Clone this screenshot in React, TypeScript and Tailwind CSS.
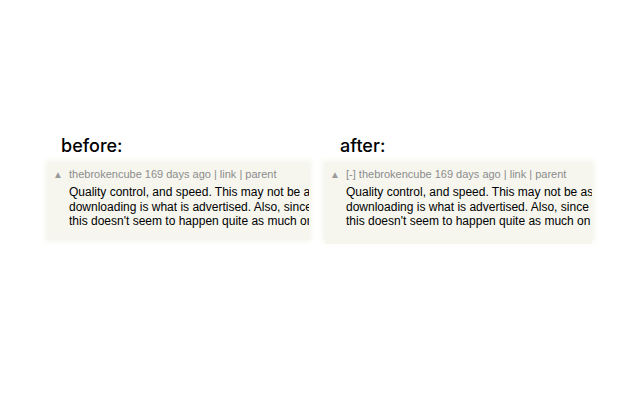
import React from 'react'

const lines = [
  'Quality control, and speed. This may not be as big an issue for everyone,',
  'downloading is what is advertised. Also, since the apps are reviewed,',
  "this doesn't seem to happen quite as much on the store as elsewhere.",
]

function Comment({ collapse }: { collapse?: boolean }) {
  return (
    <div className="bg-[#f6f6ef] shadow-[0_0_5px_3px_#f6f6ef] pt-[5px] pb-[10px] overflow-hidden">
      <div className="flex items-center h-[13px] text-[11px] leading-[13px] text-[#8c8c8c]">
        <span className="w-[21px] pl-[5px] text-[10px] leading-[10px] text-[#9a9a9a]">▲</span>
        <span className="whitespace-nowrap">
          {collapse ? '[-] ' : ''}thebrokencube 169 days ago | link | parent
        </span>
      </div>
      <div className="pl-[21px] pt-[4px] text-[12px] leading-[14.5px] text-black">
        {lines.map((l) => (
          <div key={l} className="whitespace-nowrap">{l}</div>
        ))}
      </div>
    </div>
  )
}

export default function App() {
  return (
    <div className="w-[640px] h-[400px] bg-white font-['Liberation_Sans',Arial,sans-serif]">
      <div className="flex gap-[16px] pl-[48px] pt-[133px]">
        <div className="w-[261px]">
          <h2 className="pl-[13px] h-[30px] text-[18px] leading-[26px] font-medium text-black font-['Inter',sans-serif]">before:</h2>
          <Comment />
        </div>
        <div className="w-[267px]">
          <h2 className="pl-[15px] h-[30px] text-[18px] leading-[26px] font-medium text-black font-['Inter',sans-serif]">after:</h2>
          <div className="pb-[5px] bg-[#f6f6ef]">
            <Comment collapse />
          </div>
        </div>
      </div>
    </div>
  )
}
